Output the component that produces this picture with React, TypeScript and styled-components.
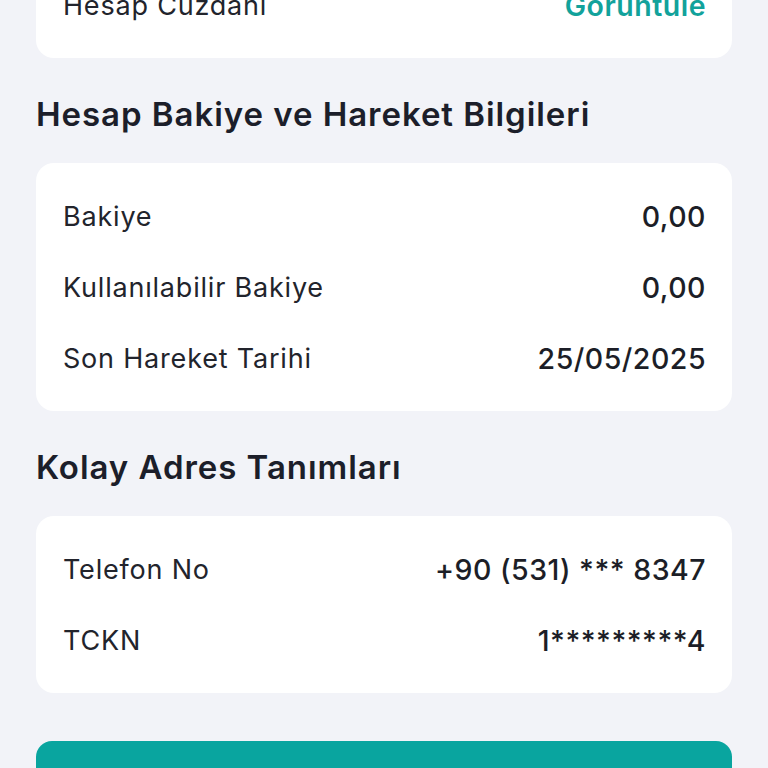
import styled, { createGlobalStyle } from "styled-components";

const GlobalStyle = createGlobalStyle`
  html, body {
    margin: 0;
    padding: 0;
    background: #f2f3f8;
    overflow: hidden;
  }
  body {
    font-family: Inter, "Noto Sans", sans-serif;
    color: #1c1e27;
  }
`;

const Page = styled.div`
  width: 768px;
  height: 768px;
  box-sizing: border-box;
  padding: 0 36px;
  display: flex;
  flex-direction: column;
  overflow: hidden;

  & > * {
    flex-shrink: 0;
  }
`;

const Card = styled.div<{ $first?: boolean }>`
  background: #ffffff;
  border-radius: 18px;
  padding: 17.5px 26px 17.5px 27px;
  display: flex;
  flex-direction: column;
  margin-top: ${(p) => (p.$first ? "-48px" : "0")};
`;

const Row = styled.div`
  height: 71px;
  display: flex;
  align-items: center;
  justify-content: space-between;
`;

const Label = styled.span`
  font-size: 27px;
  font-weight: 400;
  color: #22242c;
  letter-spacing: 0.8px;
`;

const Value = styled.span<{ $accent?: boolean }>`
  font-size: 28.5px;
  letter-spacing: 0.5px;
  color: ${(p) => (p.$accent ? "#12a29b" : "#1c1e27")};
  font-weight: ${(p) => (p.$accent ? 600 : 500)};
`;

const Heading = styled.h2`
  margin: 0;
  font-size: 33px;
  font-weight: 600;
  letter-spacing: 0.95px;
  color: #1c1e2a;
  height: 105px;
  display: flex;
  align-items: center;
  padding-top: 6px;
  box-sizing: border-box;
`;

const Button = styled.button`
  margin-top: 48px;
  height: 64px;
  border: none;
  border-radius: 16px;
  background: #09a59f;
`;

type Item = { label: string; value: string };

const balance: Item[] = [
  { label: "Bakiye", value: "0,00" },
  { label: "Kullanılabilir Bakiye", value: "0,00" },
  { label: "Son Hareket Tarihi", value: "25/05/2025" },
];

const addresses: Item[] = [
  { label: "Telefon No", value: "+90 (531) *** 8347" },
  { label: "TCKN", value: "1*********4" },
];

export default function App(): JSX.Element {
  return (
    <>
      <GlobalStyle />
      <Page>
        <Card $first>
          <Row>
            <Label>Hesap Cüzdanı</Label>
            <Value $accent>Görüntüle</Value>
          </Row>
        </Card>
        <Heading>Hesap Bakiye ve Hareket Bilgileri</Heading>
        <Card>
          {balance.map((item) => (
            <Row key={item.label}>
              <Label>{item.label}</Label>
              <Value>{item.value}</Value>
            </Row>
          ))}
        </Card>
        <Heading>Kolay Adres Tanımları</Heading>
        <Card>
          {addresses.map((item) => (
            <Row key={item.label}>
              <Label>{item.label}</Label>
              <Value>{item.value}</Value>
            </Row>
          ))}
        </Card>
        <Button />
      </Page>
    </>
  );
}
